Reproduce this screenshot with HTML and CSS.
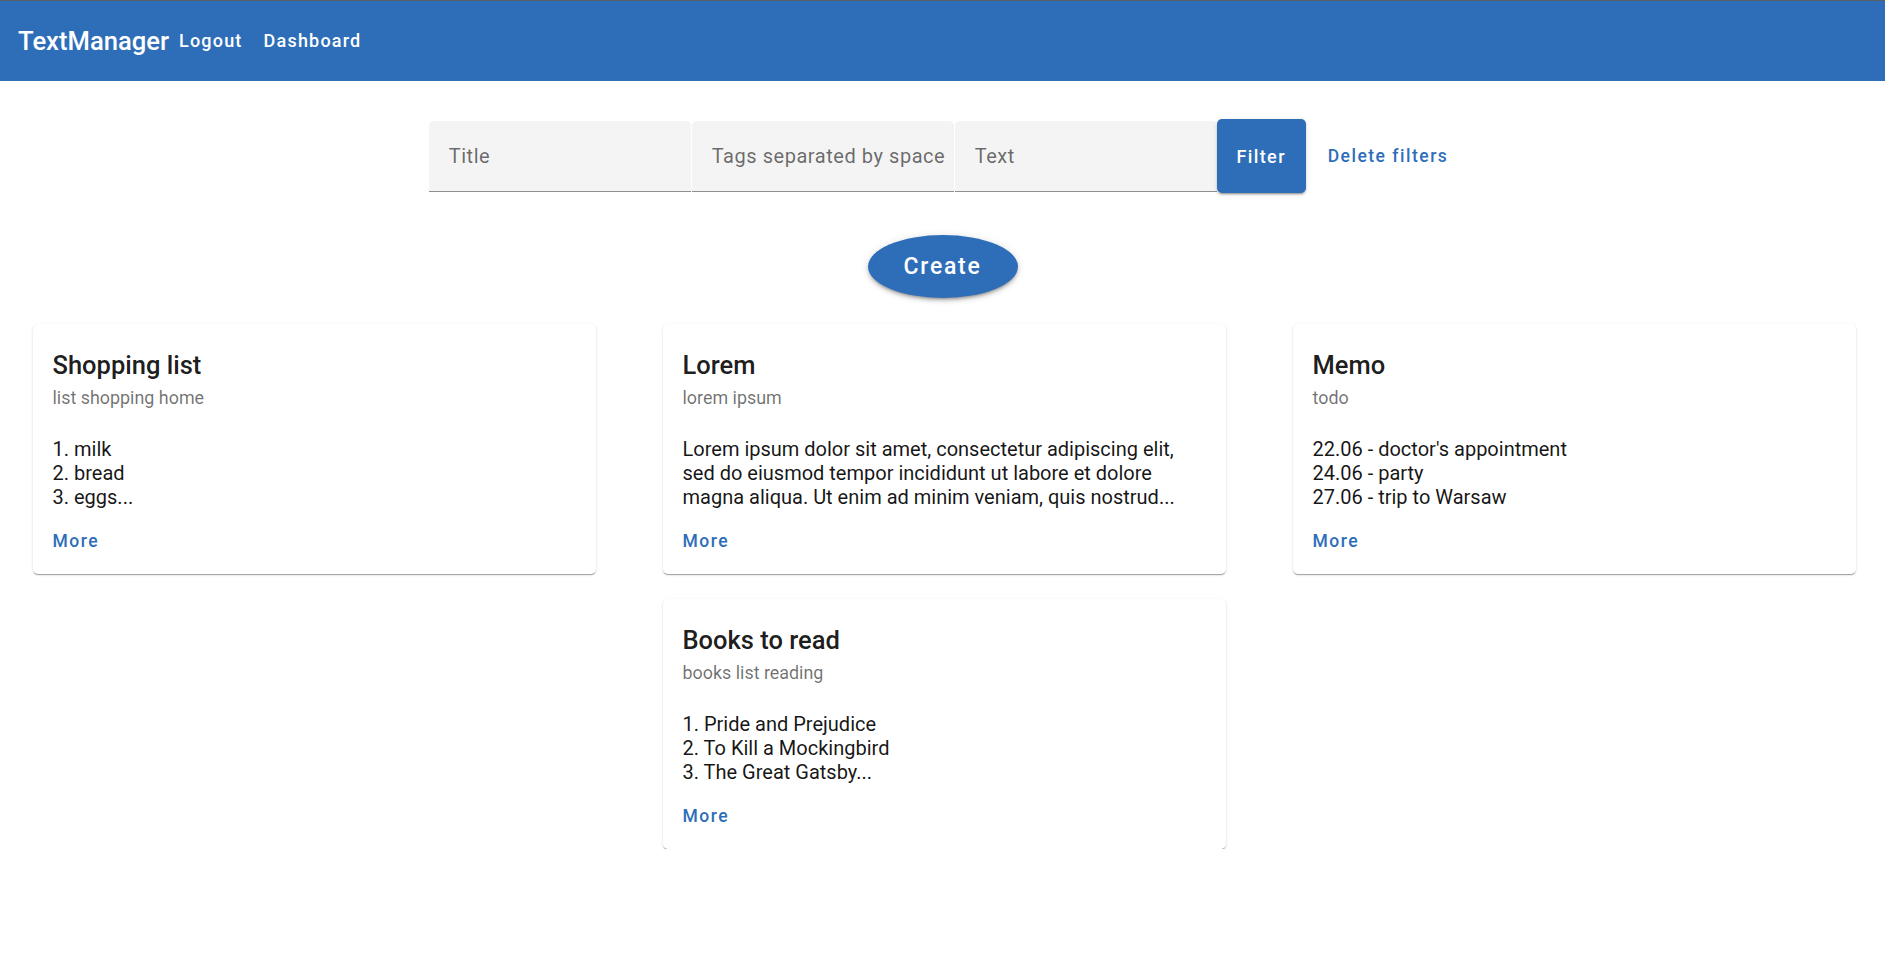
FILE: index.html
```html
<!DOCTYPE html>
<html lang="en">
<head>
<meta charset="utf-8">
<title>TextManager</title>
<link rel="stylesheet" href="styles.css">
</head>
<body>
<header class="topbar">
  <span class="brand">TextManager</span>
  <nav class="nav">
    <a class="nav-link">Logout</a>
    <a class="nav-link">Dashboard</a>
  </nav>
</header>

<main class="main">
  <form class="filters">
    <div class="field"><span class="placeholder">Title</span></div>
    <div class="field"><span class="placeholder">Tags separated by space</span></div>
    <div class="field"><span class="placeholder">Text</span></div>
    <button type="button" class="btn-filter">Filter</button>
    <button type="button" class="btn-text">Delete filters</button>
  </form>

  <div class="create-row">
    <button type="button" class="btn-create">Create</button>
  </div>

  <section class="cards">
    <article class="card">
      <h2 class="card-title">Shopping list</h2>
      <div class="card-tags">list shopping home</div>
      <p class="card-body">1. milk<br>2. bread<br>3. eggs...</p>
      <a class="card-more">More</a>
    </article>
    <article class="card">
      <h2 class="card-title">Lorem</h2>
      <div class="card-tags">lorem ipsum</div>
      <p class="card-body">Lorem ipsum dolor sit amet, consectetur adipiscing elit,<br>sed do eiusmod tempor incididunt ut labore et dolore<br>magna aliqua. Ut enim ad minim veniam, quis nostrud...</p>
      <a class="card-more">More</a>
    </article>
    <article class="card">
      <h2 class="card-title">Memo</h2>
      <div class="card-tags">todo</div>
      <p class="card-body">22.06 - doctor's appointment<br>24.06 - party<br>27.06 - trip to Warsaw</p>
      <a class="card-more">More</a>
    </article>
    <article class="card">
      <h2 class="card-title">Books to read</h2>
      <div class="card-tags">books list reading</div>
      <p class="card-body">1. Pride and Prejudice<br>2. To Kill a Mockingbird<br>3. The Great Gatsby...</p>
      <a class="card-more">More</a>
    </article>
  </section>
</main>
</body>
</html>
```

FILE: styles.css
```css
* { box-sizing: border-box; }

body {
  margin: 0;
  font-family: Roboto, "Liberation Sans", Arial, sans-serif;
  color: rgba(0, 0, 0, 0.87);
  background: #ffffff;
}

.topbar {
  height: 81px;
  border-top: 1px solid #5a5f66;
  background: #2e6eb9;
  display: flex;
  align-items: center;
  padding-left: 18px;
  color: #ffffff;
}

.brand {
  font-size: 25.6px;
  font-weight: 500;
  letter-spacing: 0;
}

.nav {
  display: flex;
  gap: 21px;
  margin-left: 10px;
  margin-top: -2px;
}

.nav-link {
  font-size: 18px;
  font-weight: 500;
  letter-spacing: 1.2px;
  color: #ffffff;
  cursor: pointer;
}

.main {
  padding-top: 38px;
}

.filters {
  display: flex;
  justify-content: center;
  align-items: center;
  margin: 0;
  padding-left: 2px;
}

.field {
  width: 262px;
  height: 71px;
  background: #f4f4f4;
  border-bottom: 1.5px solid #8f8f8f;
  border-radius: 5px 5px 0 0;
  display: flex;
  align-items: center;
  padding: 0 0 0 20px;
  margin-right: 1px;
}

.field:nth-of-type(3) {
  margin-right: 0;
}

.placeholder {
  font-size: 20px;
  letter-spacing: 0.55px;
  white-space: nowrap;
  color: rgba(0, 0, 0, 0.58);
}

.btn-filter {
  width: 89px;
  height: 74px;
  border: none;
  border-radius: 5px;
  background: #2e6eb9;
  color: #ffffff;
  font-family: inherit;
  font-size: 18px;
  font-weight: 500;
  letter-spacing: 1.4px;
  box-shadow: 0 3px 1px -2px rgba(0,0,0,0.2), 0 2px 2px 0 rgba(0,0,0,0.14), 0 1px 5px 0 rgba(0,0,0,0.12);
  cursor: pointer;
}

.btn-text {
  margin-left: 12px;
  padding: 0 10px;
  height: 45px;
  border: none;
  background: transparent;
  color: #2e6eb9;
  font-family: inherit;
  font-size: 17.5px;
  font-weight: 500;
  letter-spacing: 1.5px;
  cursor: pointer;
}

.create-row {
  display: flex;
  justify-content: center;
  margin-top: 42px;
}

.btn-create {
  width: 150px;
  height: 63px;
  border: none;
  border-radius: 50%;
  background: #2e6eb9;
  color: #ffffff;
  font-family: inherit;
  font-size: 23px;
  font-weight: 500;
  letter-spacing: 1.7px;
  box-shadow: 0 3px 3px -2px rgba(0,0,0,0.3), 0 3px 4px 0 rgba(0,0,0,0.14), 0 1px 8px 0 rgba(0,0,0,0.12);
  cursor: pointer;
}

.cards {
  display: flex;
  flex-wrap: wrap;
  justify-content: center;
  column-gap: 67px;
  row-gap: 25px;
  margin-top: 26px;
  padding-left: 3px;
}

.card {
  width: 563px;
  height: 250px;
  background: #ffffff;
  border-radius: 5px;
  box-shadow: 0 2px 1px -1px rgba(0,0,0,0.2), 0 1px 1px 0 rgba(0,0,0,0.14), 0 1px 3px 0 rgba(0,0,0,0.12);
  padding: 22px 20px 0 20px;
  display: flex;
  flex-direction: column;
}

.card-title {
  margin: 0;
  font-size: 25.5px;
  font-weight: 500;
  line-height: 38px;
  letter-spacing: 0;
  color: rgba(0, 0, 0, 0.9);
}

.card-tags {
  margin-top: 2px;
  font-size: 17.9px;
  line-height: 24px;
  color: rgba(0, 0, 0, 0.56);
}

.card-body {
  margin: 27px 0 0;
  font-size: 20px;
  line-height: 24px;
  color: rgba(0, 0, 0, 0.92);
}

.card-more {
  margin-top: 20px;
  font-size: 17.5px;
  font-weight: 500;
  line-height: 24px;
  letter-spacing: 1.5px;
  color: #2e6eb9;
  cursor: pointer;
}
```
